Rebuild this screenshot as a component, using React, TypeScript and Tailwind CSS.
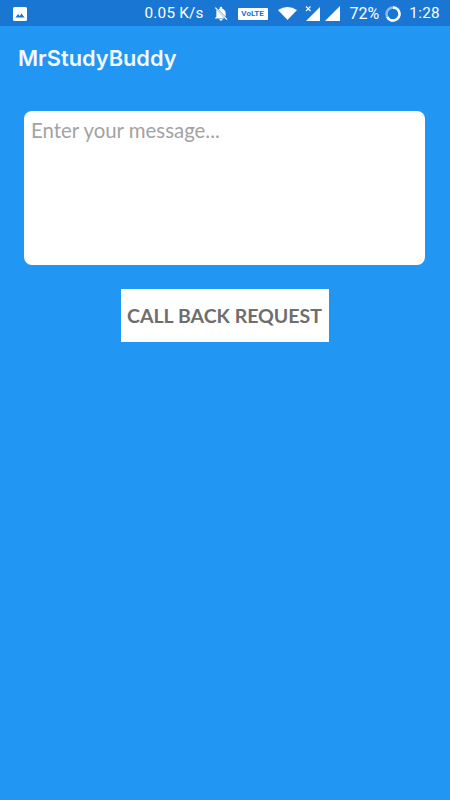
function StatusBar() {
  return (
    <div className="flex h-[26px] items-center bg-[#1976d2] pl-[13px] pr-[10px] pt-[1px] text-white">
      <svg width="14" height="14" viewBox="0 0 14 14">
        <rect width="14" height="14" rx="1.5" fill="#fff" />
        <path d="M2.5 10.5 L5 7 L6.8 9 L8.6 6.5 L11.5 10.5 Z" fill="#1976d2" />
      </svg>
      <span className="ml-auto text-[15.3px] tracking-[0.2px]">0.05 K/s</span>
      <svg className="ml-[9px]" width="16" height="16" viewBox="0 0 24 24">
        <path d="M12 22a2.5 2.5 0 0 0 2.5-2.5h-5A2.5 2.5 0 0 0 12 22Z" fill="#fff" />
        <path d="M19 15.5V11c0-3.4-1.9-6.2-5-6.9V3.3a2 2 0 0 0-4 0v.8c-.8.2-1.5.5-2.100.9L19 16.200ZM5.300 5.700 5 9.500V16l-2 2v.8h14.300Z" fill="#fff" />
        <path d="M3.500 2.500 21 20.500" stroke="#fff" strokeWidth="1.800" />
      </svg>
      <span className="ml-[9px] flex h-[12px] w-[30px] items-center justify-center rounded-[1px] bg-white text-[8px] font-bold text-[#1976d2]">
        VoLTE
      </span>
      <svg className="ml-[10px]" width="19" height="13" viewBox="0 0 19 13">
        <path d="M0 3 Q9.500 -3 19 3 L9.500 13 Z" fill="#fff" />
      </svg>
      <svg className="ml-[8px]" width="15" height="15" viewBox="0 0 15 15">
        <path d="M15 1 V15 H1 Z" fill="#fff" />
        <path d="M1 0.500 L5.500 5 M5.500 0.500 L1 5" stroke="#fff" strokeWidth="1.100" />
      </svg>
      <svg className="ml-[5px]" width="15" height="15" viewBox="0 0 15 15">
        <path d="M15 0 V15 H0 Z" fill="#fff" />
      </svg>
      <span className="ml-[10px] text-[16px]">72%</span>
      <svg className="ml-[6px]" width="16" height="16" viewBox="0 0 16 16" fill="none">
        <circle cx="8" cy="8" r="6.500" stroke="#fff" strokeOpacity="0.500" strokeWidth="2.500" />
        <path d="M8 1.500 A6.500 6.500 0 1 1 2.200 11" stroke="#fff" strokeWidth="2.500" />
      </svg>
      <span className="ml-[8px] text-[15.3px] tracking-[0.3px]">1:28</span>
    </div>
  );
}

export default function App() {
  return (
    <div className="flex h-[800px] w-[450px] flex-col bg-[#2196f3] font-['Roboto','Noto_Sans',sans-serif]">
      <StatusBar />
      <div className="flex h-[62px] items-center pl-[18px] pt-[2px] font-['Inter',sans-serif] text-[21.800px] font-semibold text-[#f2f8fe]">
        MrStudyBuddy
      </div>
      <div className="flex flex-col items-center pl-[24px] pr-[25px] pt-[23px]">
        <textarea
          className="h-[154px] w-full resize-none rounded-[8px] bg-white px-[7px] py-[4px] font-['Lato',sans-serif] text-[20.400px] outline-none placeholder:text-[#a3a3a3]"
          placeholder="Enter your message..."
        />
        <button className="mt-[24px] h-[53px] w-[208px] bg-white font-['Lato',sans-serif] text-[19.500px] font-bold whitespace-nowrap text-[#6e6e6e]">
          CALL BACK REQUEST
        </button>
      </div>
    </div>
  );
}
